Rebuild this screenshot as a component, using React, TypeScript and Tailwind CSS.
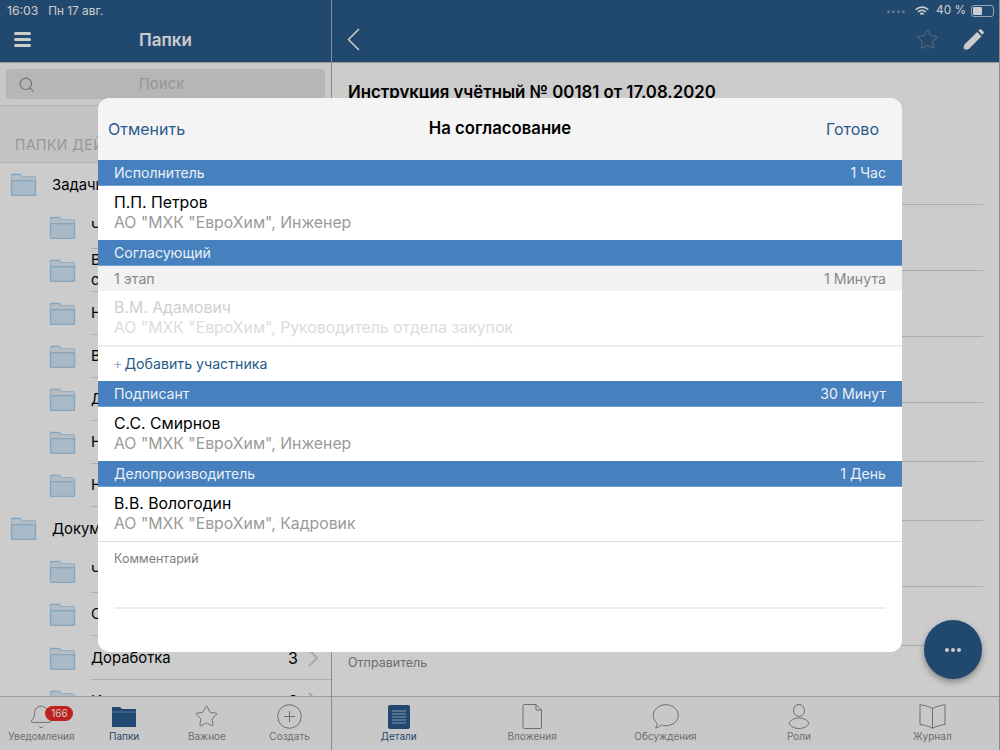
import { Search, Star, Bell } from 'lucide-react'

const font = { fontFamily: 'Inter, "Noto Sans", sans-serif' }

function FolderIcon() {
  return (
    <svg width="27" height="23" viewBox="0 0 28 24" className="shrink-0">
      <path d="M1.500 22.500V2.500a1 1 0 0 1 1-1h8l2.500 2.600h12.500a1 1 0 0 1 1 1v17.400a1 1 0 0 1-1 1h-23a1 1 0 0 1-1-1z" fill="#d2e8fa" stroke="#a9d0ee" strokeWidth="1.400" />
      <path d="M11 2.500 13 4.100h12.500a1 1 0 0 1 1 1V8h-25V3z" fill="#e2edf6" />
      <path d="M1.500 8h25" stroke="#a9d0ee" strokeWidth="1.400" fill="none" />
    </svg>
  )
}

function FolderRow({ label, h, top, count, second }: { label: string; h: number; top?: boolean; count?: string; second?: string }) {
  return (
    <div className={top ? 'flex items-center pl-[10px] pr-[10px]' : 'flex items-center pl-[49px]'} style={{ height: h }}>
      <FolderIcon />
      <div className={top ? 'ml-[15px] flex h-full flex-1 items-center pr-[3px]' : 'ml-[15px] flex h-full flex-1 items-center border-b border-[#dadada] pr-[13px]'}>
        <div className="flex-1 text-[14.800px] leading-[20px] text-black">
          {label}
          {second && <div>{second}</div>}
        </div>
        {count && <span className="mr-[10px] text-[16px] text-black">{count}</span>}
        <svg width="10" height="18" viewBox="0 0 10 18" fill="none" stroke="#d4d4d4" strokeWidth="2">
          <path d="M1 1l8 8-8 8" />
        </svg>
      </div>
    </div>
  )
}

function TabItem({ icon, label, active }: { icon: React.ReactNode; label: string; active?: boolean }) {
  return (
    <div className="flex flex-1 flex-col items-center pt-[7px]">
      <div className="flex h-[25px] items-center justify-center">{icon}</div>
      <span className={active ? 'mt-[1px] text-[10px] leading-[12px] text-[#2a5a8c]' : 'mt-[1px] text-[10px] leading-[12px] text-[#8a8a8a]'}>{label}</span>
    </div>
  )
}

function SectionBar({ title, right }: { title: string; right: string }) {
  return (
    <div className="flex h-[26px] shrink-0 items-center justify-between border-b border-[#6fa0d6] bg-[#4680bf] px-[16px] text-[14.100px] text-[#eaf0f6]">
      <span>{title}</span>
      <span>{right}</span>
    </div>
  )
}

function Person({ name, org, muted }: { name: string; org: string; muted?: boolean }) {
  return (
    <div className="h-[54px] shrink-0 bg-white pl-[16px] pt-[7px]">
      <div className={muted ? 'text-[15.800px] leading-[20px] text-[#d0d0d0]' : 'text-[15.800px] leading-[20px] text-black'}>{name}</div>
      <div className={muted ? 'text-[15.800px] leading-[20px] text-[#dcdcdc]' : 'text-[15.800px] leading-[20px] text-[#9a9a9a]'}>{org}</div>
    </div>
  )
}

export default function App() {
  const detailRows = [142, 66, 66, 66, 59, 59, 66, 59]

  return (
    <div className="relative flex h-[750px] w-[1000px] overflow-hidden bg-white" style={font}>
      {/* left column */}
      <div className="flex h-full w-[331px] shrink-0 flex-col">
        <div className="h-[63px] shrink-0 border-b border-[#c0c0c0] bg-[#2a5a8b] text-white">
          <div className="flex h-[21px] items-center gap-[10px] pl-[7px] pt-[2px]">
            <span className="text-[12.200px]">16:03</span>
            <span className="text-[11.800px]">Пн 17 авг.</span>
          </div>
          <div className="relative flex h-[40px] items-center justify-center">
            <div className="absolute left-[14px] top-[11px] flex w-[17px] flex-col gap-[3px]">
              <div className="h-[3px] rounded-full bg-white" />
              <div className="h-[3px] rounded-full bg-white" />
              <div className="h-[3px] rounded-full bg-white" />
            </div>
            <span className="text-[17px] font-semibold">Папки</span>
          </div>
        </div>
        <div className="flex h-[43px] shrink-0 items-start border-b border-[#e2e2e2] bg-[#fafafa] px-[6px] pt-[6px]">
          <div className="relative flex h-[30px] flex-1 items-center justify-center rounded-[4px] bg-[#e4e4e4] pr-[8px] text-[15px] text-[#bbbbbb]">
            <Search size={17} strokeWidth={1.600} className="absolute left-[12px] text-[#8f8f8f]" />
            <span>Поиск</span>
          </div>
        </div>
        <div className="flex h-[57px] shrink-0 items-end border-b border-[#dedede] bg-[#f4f4f4] pb-[7px] pl-[15px] text-[14px] tracking-[0.5px] text-[#bcbcbc]">
          ПАПКИ ДЕЙСТВИЙ
        </div>
        <div className="min-h-0 flex-1 overflow-hidden">
          <FolderRow top label="Задачи" h={43} />
          <FolderRow label="Черновики" h={43} />
          <FolderRow label="В работе" second="согласование" h={43} />
          <FolderRow label="На подпись" h={43} />
          <FolderRow label="Входящие" h={43} />
          <FolderRow label="Доработка" h={43} />
          <FolderRow label="На контроле" h={43} />
          <FolderRow label="На исполнении" h={43} />
          <FolderRow top label="Документы" h={43} />
          <FolderRow label="Черновики" h={43} />
          <FolderRow label="Согласование" h={43} />
          <FolderRow label="Доработка" count="3" h={44} />
          <FolderRow label="Исполнение" count="2" h={43} />
        </div>
        <div className="flex h-[54px] shrink-0 border-t border-[#c4c4c4] bg-[#fafafa]">
          <TabItem
            label="Уведомления"
            icon={
              <div className="relative">
                <Bell size={26} strokeWidth={0.900} className="text-[#8a8a8a]" />
                <span className="absolute left-[17px] top-[2px] flex h-[15px] w-[28px] items-center justify-center rounded-full bg-[#f02a27] text-[10px] text-white">166</span>
              </div>
            }
          />
          <TabItem
            active
            label="Папки"
            icon={
              <svg width="24" height="20" viewBox="0 0 24 20">
                <path d="M0 20V1a1 1 0 0 1 1-1h7l2 2h13a1 1 0 0 1 1 1v17z" fill="#2a5a8c" />
                <path d="M0 5h24" stroke="#7aa0c8" strokeWidth="0.800" />
              </svg>
            }
          />
          <TabItem label="Важное" icon={<Star size={25} strokeWidth={0.900} className="text-[#8a8a8a]" />} />
          <TabItem
            label="Создать"
            icon={
              <svg width="25" height="25" viewBox="0 0 25 25" fill="none" stroke="#8a8a8a" strokeWidth="1">
                <circle cx="12.500" cy="12.500" r="11.800" />
                <path d="M12.500 7v11M7 12.500h11" />
              </svg>
            }
          />
        </div>
      </div>

      {/* right column */}
      <div className="flex h-full flex-1 flex-col border-x border-[#b0b0b0]">
        <div className="h-[63px] shrink-0 border-b border-[#c0c0c0] bg-[#2a5a8b] text-white">
          <div className="flex h-[21px] items-center justify-end gap-[5px] pr-[5px] pt-[1px] text-[11.800px]">
            <span className="mr-[4px] text-[8px] tracking-[0.5px] text-[#8aa0b8]">••••</span>
            <svg width="14" height="11" viewBox="0 0 14 11" fill="none" stroke="#ffffff" strokeWidth="1.700" className="mr-[2px]">
              <path d="M.800 3.700a9 9 0 0 1 12.400 0" />
              <path d="M3 6a5.800 5.800 0 0 1 8 0" />
              <path d="M5.200 8.300a2.600 2.600 0 0 1 3.600 0" />
            </svg>
            <span>40 %</span>
            <div className="flex h-[12px] w-[23px] items-center rounded-[3px] border border-white/70 p-[1px]">
              <div className="h-full w-[9px] rounded-[1px] bg-white" />
            </div>
          </div>
          <div className="flex h-[40px] items-center justify-between pb-[3px] pl-[15px] pr-[14px]">
            <svg width="13" height="23" viewBox="0 0 13 23" fill="none" stroke="#ffffff" strokeWidth="1.500">
              <path d="M12 1 1.500 11.500 12 22" />
            </svg>
            <div className="flex items-center gap-[22px]">
              <Star size={23} strokeWidth={1.200} className="text-[#6c7c90]" />
              <svg width="24" height="24" viewBox="0 0 26 26">
                <path d="M2 24.500l1.800-6.500L17.500 4.300l4.700 4.700L8.500 22.700z" fill="#ffffff" />
                <path d="M18.800 3l1.500-1.500a1.200 1.200 0 0 1 1.700 0l2.500 2.500a1.200 1.200 0 0 1 0 1.700L23 7.200z" fill="#ffffff" />
                <path d="M2 24.500l.9-3.200 2.300 2.300z" fill="#2a5a8b" />
              </svg>
            </div>
          </div>
        </div>
        <div className="min-h-0 flex-1 overflow-hidden px-[16px]">
          {detailRows.map((h, i) => (
            <div key={i} className="border-b border-[#d8d8d8]" style={{ height: h }}>
              {i === 0 && <div className="pt-[19px] text-[16.800px] font-semibold leading-[20px] text-black">Инструкция учётный № 00181 от 17.08.2020</div>}
            </div>
          ))}
          <div className="pt-[8px] text-[12.500px] text-[#8a8a8a]">Отправитель</div>
        </div>
        <div className="flex h-[54px] shrink-0 border-t border-[#c4c4c4] bg-[#fafafa]">
          <TabItem
            active
            label="Детали"
            icon={
              <svg width="22" height="24" viewBox="0 0 22 24">
                <rect width="22" height="24" rx="2" fill="#2a5a8c" />
                <path d="M4 6h14M4 9h14M4 12h14M4 15h14M4 18h14" stroke="#a9c0d8" strokeWidth="1" />
              </svg>
            }
          />
          <TabItem
            label="Вложения"
            icon={
              <svg width="20" height="25" viewBox="0 0 20 25" fill="none" stroke="#8a8a8a" strokeWidth="1">
                <path d="M2.500 .500h11.500l5.500 5.500v17a1.500 1.500 0 0 1-1.500 1.500H2.500A1.500 1.500 0 0 1 1 23V2A1.500 1.500 0 0 1 2.500 .500z" />
                <path d="M14 .500v5.500h5.500" />
              </svg>
            }
          />
          <TabItem
            label="Обсуждения"
            icon={
              <svg width="27" height="25" viewBox="0 0 27 25" fill="none" stroke="#8a8a8a" strokeWidth="1">
                <path d="M13.800 .700c6.900 0 12.500 4.700 12.500 10.500S20.700 21.700 13.800 21.700c-1.500 0-3-.2-4.400-.7-1.400 1.500-3.400 2.700-5.900 3 1.200-1.500 1.700-3 1.600-4.700C2.500 17.400 1.300 14.500 1.300 11.200 1.300 5.400 6.900.7 13.800.700z" />
              </svg>
            }
          />
          <TabItem
            label="Роли"
            icon={
              <svg width="22" height="25" viewBox="0 0 22 25" fill="none" stroke="#8a8a8a" strokeWidth="1">
                <ellipse cx="11" cy="6.500" rx="5.500" ry="6" />
                <path d="M11 14c5 0 9 2.500 10 5.200-1 2.700-5 5.300-10 5.300S2 21.900 1 19.200C2 16.500 6 14 11 14z" />
              </svg>
            }
          />
          <TabItem
            label="Журнал"
            icon={
              <svg width="27" height="25" viewBox="0 0 27 25" fill="none" stroke="#8a8a8a" strokeWidth="1">
                <path d="M13.500 4.500C10 2.500 5.500 1.300 1 .700v19.800c4.500.5 9 1.800 12.500 3.800 3.500-2 8-3.300 12.500-3.800V.700c-4.500.6-9 1.800-12.500 3.800z" />
                <path d="M13.500 4.500v19.800" />
              </svg>
            }
          />
        </div>
      </div>

      <div className="absolute right-[18px] top-[620px] flex h-[59px] w-[58px] items-center justify-center gap-[2px] rounded-full bg-[#2a5a8b] shadow-[0_3px_6px_rgba(0,0,0,0.35)]">
        <span className="h-[4px] w-[4px] rounded-full bg-white" />
        <span className="h-[4px] w-[4px] rounded-full bg-white" />
        <span className="h-[4px] w-[4px] rounded-full bg-white" />
      </div>

      {/* dim layer */}
      <div className="absolute inset-0 bg-black/20" />

      {/* modal */}
      <div className="absolute left-[98px] top-[98px] flex h-[554px] w-[804px] flex-col overflow-hidden rounded-[12px] bg-white">
        <div className="flex h-[62px] shrink-0 items-center justify-between bg-[#f4f4f4] px-[10px] text-[16px] text-[#2a5a8c]">
          <span className="w-[120px]">Отменить</span>
          <span className="text-[16.700px] font-semibold text-black">На согласование</span>
          <span className="w-[120px] pr-[13px] text-right">Готово</span>
        </div>
        <SectionBar title="Исполнитель" right="1 Час" />
        <Person name="П.П. Петров" org={'АО "МХК "ЕвроХим", Инженер'} />
        <SectionBar title="Согласующий" right="" />
        <div className="flex h-[25px] shrink-0 items-center justify-between bg-[#f2f2f2] px-[16px] text-[14.200px] text-[#8a8a8a]">
          <span>1 этап</span>
          <span>1 Минута</span>
        </div>
        <div className="shrink-0 border-b-2 border-[#ececec]">
          <Person muted name="В.М. Адамович" org={'АО "МХК "ЕвроХим", Руководитель отдела закупок'} />
        </div>
        <div className="flex h-[34px] shrink-0 items-center pl-[15px] text-[14.200px] text-[#2a5a8c]">
          <span className="mr-[2px] text-[#8fa8c4]">+</span>
          Добавить участника
        </div>
        <SectionBar title="Подписант" right="30 Минут" />
        <Person name="С.С. Смирнов" org={'АО "МХК "ЕвроХим", Инженер'} />
        <SectionBar title="Делопроизводитель" right="1 День" />
        <div className="shrink-0 border-b border-[#dedede]">
          <Person name="В.В. Вологодин" org={'АО "МХК "ЕвроХим", Кадровик'} />
        </div>
        <div className="px-[16px] pt-[9px]">
          <div className="text-[12.500px] leading-[15px] text-[#7f7f7f]">Комментарий</div>
          <div className="mt-[41px] border-b-2 border-[#ececec]" />
        </div>
      </div>
    </div>
  )
}
